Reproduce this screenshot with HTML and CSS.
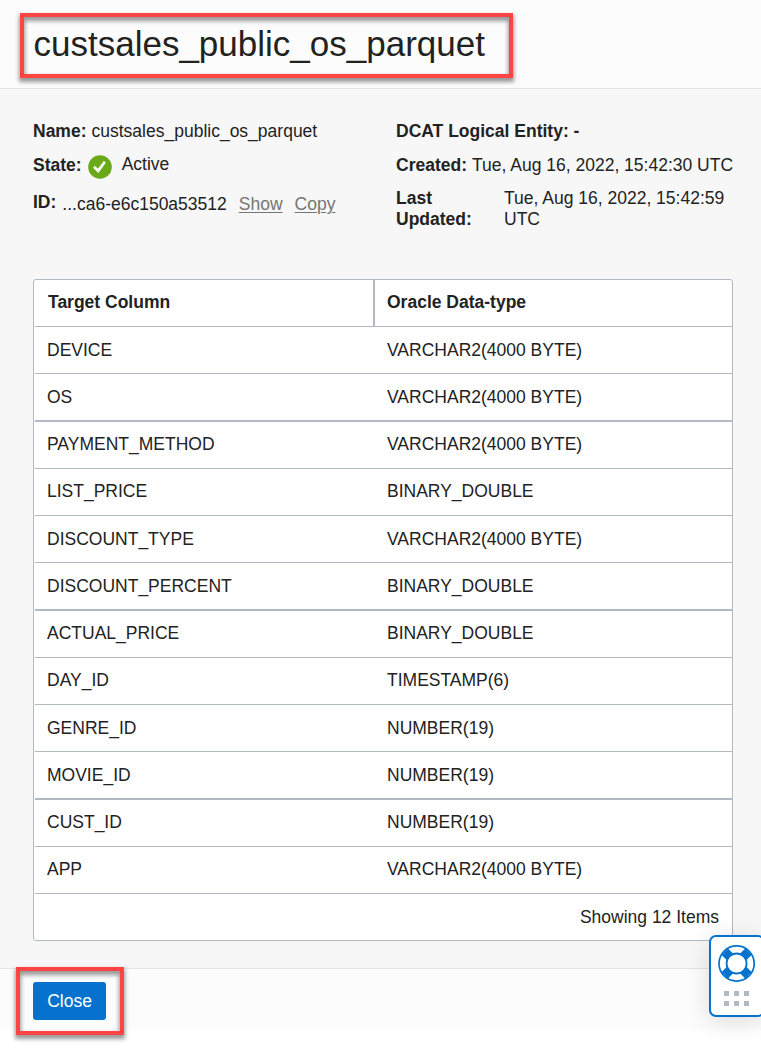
FILE: index.html
```html
<!DOCTYPE html>
<html lang="en">
<head>
<meta charset="utf-8">
<title>custsales_public_os_parquet</title>
<link rel="stylesheet" href="styles.css">
</head>
<body>
<div class="panel">
  <header class="panel-header"><h1 class="callout title">custsales_public_os_parquet</h1></header>
  <main class="content">
    <section class="details">
      <div class="details-col">
        <div class="field name"><b>Name:</b><span>custsales_public_os_parquet</span></div>
        <div class="field state"><b>State:</b>
          <svg class="check" viewBox="0 0 24 24"><circle cx="12" cy="12" r="11.8" fill="#6aaa1a"/><path d="M6 11.7l4.2 4.2 6.6-9.2" fill="none" stroke="#fff" stroke-width="2.7"/></svg>
          <span class="active">Active</span></div>
        <div class="field ident"><b>ID:</b><span class="ocid">...ca6-e6c150a53512</span><a class="link">Show</a><a class="link">Copy</a></div>
      </div>
      <div class="details-col">
        <div class="field entity"><b>DCAT Logical Entity: -</b></div>
        <div class="field created"><b>Created:</b><span>Tue, Aug 16, 2022, 15:42:30 UTC</span></div>
        <div class="field updated"><b>Last Updated:</b><span>Tue, Aug 16, 2022, 15:42:59 UTC</span></div>
      </div>
    </section>
    <section class="table">
      <div class="row head"><div class="cell">Target Column</div><div class="cell">Oracle Data-type</div></div>
      <div class="row low"><div class="cell">DEVICE</div><div class="cell">VARCHAR2(4000 BYTE)</div></div>
      <div class="row low thick"><div class="cell">OS</div><div class="cell">VARCHAR2(4000 BYTE)</div></div>
      <div class="row"><div class="cell">PAYMENT_METHOD</div><div class="cell">VARCHAR2(4000 BYTE)</div></div>
      <div class="row"><div class="cell">LIST_PRICE</div><div class="cell">BINARY_DOUBLE</div></div>
      <div class="row low"><div class="cell">DISCOUNT_TYPE</div><div class="cell">VARCHAR2(4000 BYTE)</div></div>
      <div class="row low thick"><div class="cell">DISCOUNT_PERCENT</div><div class="cell">BINARY_DOUBLE</div></div>
      <div class="row"><div class="cell">ACTUAL_PRICE</div><div class="cell">BINARY_DOUBLE</div></div>
      <div class="row"><div class="cell">DAY_ID</div><div class="cell">TIMESTAMP(6)</div></div>
      <div class="row low"><div class="cell">GENRE_ID</div><div class="cell">NUMBER(19)</div></div>
      <div class="row low thick"><div class="cell">MOVIE_ID</div><div class="cell">NUMBER(19)</div></div>
      <div class="row"><div class="cell">CUST_ID</div><div class="cell">NUMBER(19)</div></div>
      <div class="row"><div class="cell">APP</div><div class="cell">VARCHAR2(4000 BYTE)</div></div>
      <div class="summary">Showing 12 Items</div>
    </section>
  </main>
  <footer class="panel-footer"><div class="callout action"><button class="close">Close</button></div></footer>
  <aside class="help">
    <svg class="buoy" viewBox="0 0 38 38">
      <circle cx="18.6" cy="18.5" r="17.6" fill="#fff" stroke="#0572ce" stroke-width="1.7"/>
      <path d="M6.8 6.7l6 6M30.4 6.7l-6 6M6.8 30.3l6-6M30.4 30.3l-6-6" stroke="#0572ce" stroke-width="9"/>
      <circle cx="18.6" cy="18.5" r="10" fill="#fff" stroke="#0572ce" stroke-width="1.8"/>
    </svg>
    <div class="dots"><i></i><i></i><i></i><i></i><i></i><i></i></div>
  </aside>
</div>
</body>
</html>
```
FILE: styles.css
```css
* { box-sizing: border-box; }
body { margin: 0; background: #fff; color: #222; font: 17.5px/21px "Liberation Sans", Arial, sans-serif; }
.panel { position: relative; width: 761px; height: 1049px; overflow: hidden; }
.panel-header { height: 89px; padding: 13px 0 0 20px; background: #fcfcfc; border-bottom: 1px solid #e3e3e3; }
.callout { border: 4px solid #ff4444; box-shadow: 0 3px 4px 1px rgba(0,0,0,.4), inset 0 3px 4px 1px rgba(0,0,0,.4); }
.title { width: 493px; height: 65px; margin: 0; padding: 7px 0 0 9.5px; font-size: 35px; line-height: 40px; font-weight: 400; white-space: nowrap; }
.content { height: 879px; padding: 32px 28px 0 33px; background: #f7f7f7; }
.details { display: grid; grid-template-columns: 363px 337px; height: 158px; }
.field { display: flex; white-space: nowrap; }
.field b { font-weight: 700; }
.name, .created { gap: 5px; }
.state { margin-top: 13px; height: 26px; }
.check { width: 24px; height: 24px; margin: 0 10px 0 6px; }
.active { margin-top: -1px; }
.ident { margin-top: 11px; }
.ocid { margin: 2px 0 0 6px; }
.link { margin: 2px 0 0 12px; color: #757575; text-decoration: underline; text-underline-offset: 2px; text-decoration-thickness: 1px; }
.created { margin-top: 13px; }
.updated { margin-top: 12px; }
.updated b { width: 108px; padding-right: 20px; white-space: normal; }
.updated span { width: 229px; white-space: normal; }
.table { width: 700px; background: #fff; border: 1px solid #b3b9c3; border-radius: 3px; padding-left: 1px; }
.row { display: grid; grid-template-columns: 339px 1fr; height: 47px; border-bottom: 1px solid #b3b9c3; }
.thick { height: 48px; border-bottom-width: 2px; }
.cell { padding: 12px 0 0 12px; }
.low .cell { padding-top: 13px; }
.cell + .cell { padding-left: 13px; }
.head { font-weight: 700; }
.head .cell { padding: 12px 0 0 13px; }
.head .cell + .cell { border-left: 2px solid #b3b9c3; padding-left: 12px; margin-left: -1px; }
.summary { height: 46px; padding: 13px 13px 0 0; text-align: right; }
.panel-footer { height: 62px; padding-left: 16px; background: #fcfcfc; border-top: 1px solid #e3e3e3; }
.action { width: 108px; height: 68px; margin-top: -2px; padding: 11px 0 0 13px; }
.close { display: block; width: 73px; height: 38px; padding: 0; border: 0; border-radius: 3px; background: #0572ce; color: #fff; font: inherit; }
.help { position: absolute; left: 709px; top: 935px; width: 56px; height: 82px; padding: 8px 0 0 7px; background: #fff; border: 2px solid #0572ce; border-radius: 7px; box-shadow: 0 4px 24px rgba(0,0,0,.13); }
.buoy { display: block; width: 38px; height: 38px; }
.dots { display: grid; grid-template-columns: repeat(3, 5px); gap: 5px; margin: 7.5px 0 0 6px; }
.dots i { height: 5px; background: #b3b9c3; }
```
